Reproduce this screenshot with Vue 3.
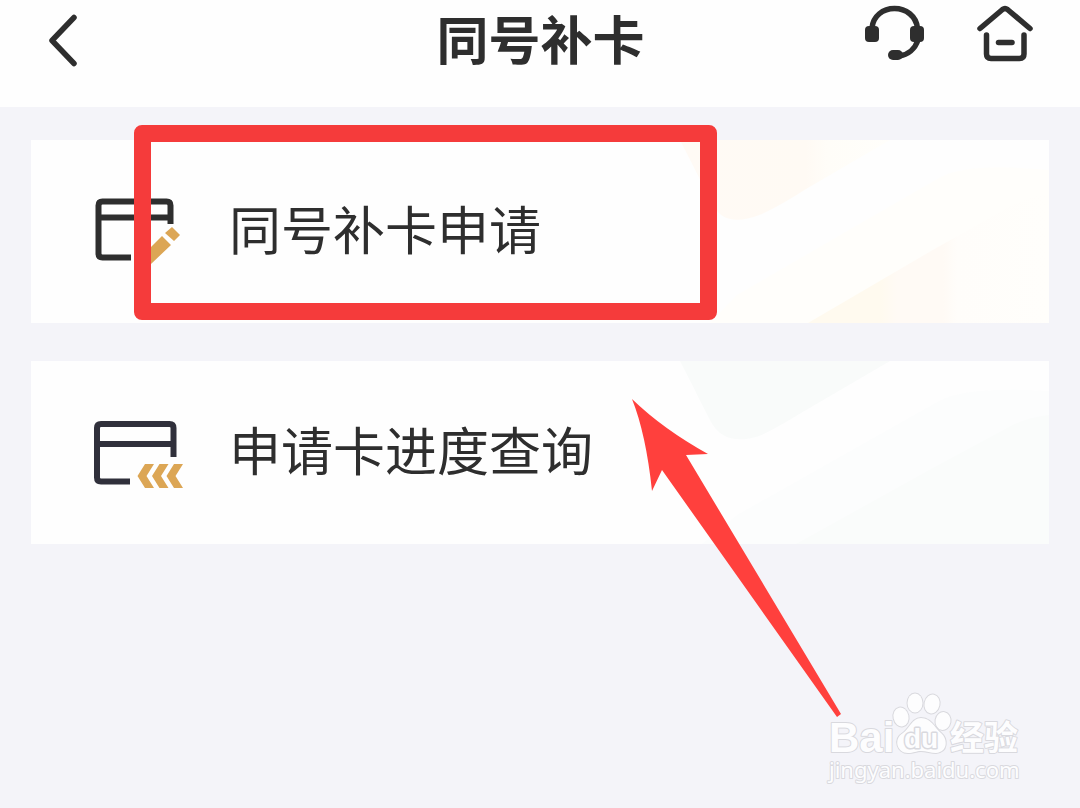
<script setup>
const cards = [
  { id: 'apply', label: '同号补卡申请', marked: true },
  { id: 'progress', label: '申请卡进度查询', marked: false },
]
</script>

<template>
  <div class="page">
    <header class="bar">
      <button class="icon-button back" type="button" aria-label="返回">
        <svg width="30" height="54" viewBox="0 0 30 54" fill="none" stroke="#2e2e2e" stroke-width="5.500" stroke-linecap="round" stroke-linejoin="round">
          <path d="M26 3.500 4 26.500 26 49.500" />
        </svg>
      </button>
      <h1 class="title">同号补卡</h1>
      <div class="actions">
        <button class="icon-button" type="button" aria-label="客服">
          <svg width="60" height="58" viewBox="0 0 60 58">
            <g fill="none" stroke="#2e2e2e" stroke-width="5.500">
              <path d="M7 24C8 12 18 4.500 29.500 4.500S51 12 52.500 24" />
              <path d="M53 36C50 45 43 51 34 52" />
            </g>
            <g fill="#2e2e2e">
              <rect x="0" y="22" width="14" height="16" rx="4" />
              <rect x="45" y="22" width="14" height="16" rx="4" />
              <rect x="23" y="46" width="15" height="10" rx="5" />
            </g>
          </svg>
        </button>
        <button class="icon-button" type="button" aria-label="首页">
          <svg width="56" height="58" viewBox="0 0 56 58" fill="none" stroke="#2e2e2e" stroke-width="5.500" stroke-linecap="round" stroke-linejoin="round">
            <path d="M3 24.500 25.500 5.500Q28 3.500 30.500 5.500L53 24.500" />
            <path d="M9.500 31V50Q9.500 54.500 14 54.500H42.500Q47 54.500 47 50V31" />
            <path d="M21.500 38.500H35" />
          </svg>
        </button>
      </div>
    </header>

    <main class="content">
      <div v-for="card in cards" :key="card.id" class="slot">
        <button class="card" type="button">
          <svg v-if="card.id === 'apply'" class="decor" viewBox="649 0 369 183" aria-hidden="true">
            <defs>
              <linearGradient id="warm-top" x1="0" x2="1">
                <stop offset="0" stop-color="#fffaf5" />
                <stop offset="0.600" stop-color="#fffaf4" />
                <stop offset="0.700" stop-color="#fffdf8" />
                <stop offset="1" stop-color="#fffefb" />
              </linearGradient>
              <linearGradient id="warm-low" x1="0" x2="1">
                <stop offset="0" stop-color="#fffaef" />
                <stop offset="0.300" stop-color="#fffaef" />
                <stop offset="0.370" stop-color="#fffaf5" />
                <stop offset="0.560" stop-color="#fffaf5" />
                <stop offset="0.620" stop-color="#fffdfa" />
                <stop offset="1" stop-color="#fffefb" />
              </linearGradient>
            </defs>
            <path fill="url(#warm-top)" d="M649 0 682 65Q694 89 731 74Q752 64 775 49L859 0Z" />
            <path fill="#fffefb" d="M679 183 706 155 830 83 908 38Q936 22 1018 30V183Z" />
            <path fill="url(#warm-low)" d="M777 183 900 111 978 67Q996 57 1018 53V183Z" />
          </svg>
          <svg v-else class="decor" viewBox="649 0 369 183" aria-hidden="true">
            <path fill="#f9fbfa" d="M649 0 680 61Q694 86 728 75Q746 67 770 52L859 0Z" />
            <path fill="#fcfdfd" d="M671 183 706 154 830 84 908 40Q936 25 1018 30V183Z" />
            <path fill="#fafcfb" d="M765 183 900 108 978 66Q996 56 1018 54V183Z" />
          </svg>

          <svg v-if="card.id === 'apply'" class="glyph" width="90" height="70" viewBox="0 0 90 70" aria-hidden="true">
            <g fill="none" stroke="#2e2e2e" stroke-width="6">
              <path d="M37 60.500H8.500Q4.500 60.500 4.500 56.500V8.500Q4.500 4.500 8.500 4.500H72.500Q76.500 4.500 76.500 8.500V27" />
              <path d="M4.500 20.500H76.500" />
            </g>
            <path fill="#dca655" d="M78 30 86 38 80 44 71 36ZM68 39 77 48 57 67H46V61Z" />
          </svg>
          <svg v-else class="glyph" width="90" height="70" viewBox="0 0 90 70" aria-hidden="true">
            <g fill="none" stroke="#30303b" stroke-width="6">
              <path d="M36 63.500H7Q3 63.500 3 59.500V10Q3 6 7 6H75.500Q79.500 6 79.500 10V39" />
              <path d="M3 26H79.500" />
            </g>
            <path fill="#dca655" d="M51 46H60L52.500 58 60 70H51L43.500 58ZM65.500 46H74.500L67 58 74.500 70H65.500L58 58ZM80 46H89L81.500 58 89 70H80L72.500 58Z" />
          </svg>
          <span class="label">{{ card.label }}</span>
        </button>
        <div v-if="card.marked" class="marker"></div>
      </div>

      <svg class="arrow" width="210" height="320" viewBox="0 0 210 320" aria-hidden="true">
        <path fill="#ff403d" d="M0 0Q31 30 76 55L54 56 209 315 205 318 30 71 20 92Q14 35 0 0Z" />
      </svg>
    </main>

    <svg class="watermark" width="204" height="100" viewBox="0 0 204 100" role="img" aria-label="Baidu 经验 jingyan.baidu.com">
      <g class="outlined">
        <text class="latin" x="5" y="62">Bai</text>
        <ellipse cx="77" cy="27" rx="7.500" ry="9.500" transform="rotate(-12 77 27)" />
        <ellipse cx="91" cy="13" rx="7.500" ry="9.500" />
        <ellipse cx="108" cy="14" rx="7.500" ry="9.500" transform="rotate(12 108 14)" />
        <ellipse cx="119" cy="31" rx="7.500" ry="9" transform="rotate(10 119 31)" />
        <path d="M97 28C88 28 86 38 79 43C69 49 73 63 84 63C90 63 92 61 97 61C102 61 107 63 112 63C124 62 124 49 117 43C110 37 107 28 97 28Z" />
        <text class="du" x="80" y="58">du</text>
        <text class="cjk" x="126" y="60">经验</text>
        <text class="site" x="5" y="88">jingyan.baidu.com</text>
      </g>
    </svg>
  </div>
</template>

<style>
body {
  background: #f4f4f9;
}
</style>

<style scoped>
.page {
  position: relative;
  min-height: 100vh;
  background: #f4f4f9;
  color: #2e2e2e;
  font-family: "Noto Sans CJK SC", sans-serif;
  overflow: hidden;
}

.bar {
  display: grid;
  grid-template-columns: 1fr auto 1fr;
  align-items: start;
  padding: 4px 47px 35px 48px;
  background: #fefefe;
}

.icon-button {
  display: flex;
  padding: 0;
  border: 0;
  background: none;
}

.back {
  justify-self: start;
  padding-top: 10px;
}

.title {
  margin: 0;
  font-size: 52px;
  font-weight: 700;
  line-height: 68px;
}

.actions {
  display: flex;
  justify-content: flex-end;
  gap: 52px;
}

.content {
  position: relative;
  display: flex;
  flex-direction: column;
  gap: 38px;
  padding: 33px 31px;
}

.slot {
  position: relative;
}

.card {
  position: relative;
  display: flex;
  align-items: center;
  gap: 45px;
  width: 100%;
  min-height: 183px;
  padding: 0 63px;
  border: 0;
  background: #fefefe;
  color: inherit;
  font-family: inherit;
  text-align: left;
}

.decor {
  position: absolute;
  top: 0;
  right: 0;
  height: 100%;
}

.glyph {
  position: relative;
  flex: none;
  overflow: visible;
}

.label {
  position: relative;
  padding-bottom: 8px;
  font-size: 52px;
  line-height: 76px;
}

.marker {
  position: absolute;
  top: -15px;
  left: 103px;
  box-sizing: border-box;
  width: 583px;
  height: 195px;
  border: 17px solid #f53b3b;
  border-radius: 8px;
  pointer-events: none;
}

.arrow {
  position: absolute;
  top: 292px;
  left: 632px;
  pointer-events: none;
}

.watermark {
  position: absolute;
  right: 52px;
  bottom: 18px;
}

.outlined {
  fill: #fdfdfe;
  stroke: #d9d9de;
  stroke-width: 2px;
  stroke-linejoin: round;
  paint-order: stroke;
}

.latin {
  font: 700 42px "Liberation Sans", sans-serif;
}

.du {
  font: 700 28px "Liberation Sans", sans-serif;
  stroke-width: 3px;
}

.cjk {
  font: 700 34px "Noto Sans CJK SC", sans-serif;
}

.site {
  font: 400 22px "Noto Sans", sans-serif;
}
</style>
